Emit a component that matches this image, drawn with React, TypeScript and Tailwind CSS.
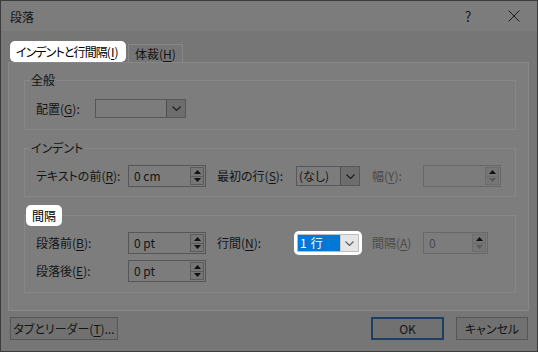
import React from 'react';

const Chevron: React.FC<{ color?: string }> = ({ color = '#1f1f1f' }) => (
    <svg width="9" height="5" viewBox="0 0 9 5" fill="none">
        <polyline points="0.5,0.5 4.5,4.5 8.5,0.5" stroke={color} strokeWidth="1.2" />
    </svg>
);

const Arrow: React.FC<{ up?: boolean; color: string }> = ({ up, color }) => (
    <svg width="7" height="4" viewBox="0 0 7 4">
        {up ? <polygon points="0,4 7,4 3.5,0" fill={color} /> : <polygon points="0,0 7,0 3.5,4" fill={color} />}
    </svg>
);

interface SpinnerProps {
    value?: string;
    width: string;
    disabled?: boolean;
}

const Spinner: React.FC<SpinnerProps> = ({ value = '', width, disabled }) => (
    <div className={`flex h-[22px] ${width} border ${disabled ? 'border-[#686868] text-[#4a4a4a]' : 'border-[#565656] text-[#141414]'} bg-[#7c7c7c]`}>
        <div className="flex-1 whitespace-nowrap pl-[5px] leading-[20px]">{value}</div>
        <div className={`my-[1px] mr-[1px] flex w-[14px] flex-col border ${disabled ? 'border-[#6c6c6c]' : 'border-[#5c5c5c]'} bg-[#767676]`}>
            <div className={`flex flex-1 items-center justify-center border-b ${disabled ? 'border-[#6c6c6c]' : 'border-[#5c5c5c]'}`}>
                <Arrow up color="#111111" />
            </div>
            <div className="flex flex-1 items-center justify-center">
                <Arrow color={disabled ? '#5a5a5a' : '#111111'} />
            </div>
        </div>
    </div>
);

const Combo: React.FC<{ value?: string; width: string; height: string }> = ({ value = '', width, height }) => (
    <div className={`flex ${width} ${height} border border-[#575757] bg-[#7c7c7c]`}>
        <div className="flex-1 whitespace-nowrap pl-[2px] leading-[18px] text-[#141414]">{value}</div>
        <div className="flex w-[19px] items-center justify-center border-l border-[#4e4e4e] bg-[#6d6d6d]">
            <Chevron />
        </div>
    </div>
);

const Label: React.FC<{ width: string; children: React.ReactNode; disabled?: boolean }> = ({ width, children, disabled }) => (
    <div className={`${width} shrink-0 whitespace-nowrap ${disabled ? 'text-[#4a4a4a]' : 'text-[#141414]'}`}>{children}</div>
);

const U: React.FC<{ children: React.ReactNode }> = ({ children }) => <span className="underline underline-offset-2">{children}</span>;

export default function App() {
    return (
        <div className="flex h-[352px] w-[538px] flex-col border border-[#3c3c3c] bg-[#767676] font-['Yu_Gothic_UI','Noto_Sans_CJK_JP','Noto_Sans',sans-serif] text-[12px] leading-[16px] text-[#141414] [font-feature-settings:'palt']">
            {/* Title bar */}
            <div className="flex h-[30px] shrink-0 items-center bg-[#7c7c7c] pl-[9px]">
                <span className="pt-[1px]">段落</span>
                <div className="ml-auto flex h-full">
                    <div className="flex w-[46px] items-center justify-center text-[14px] text-[#1a1a1a]">?</div>
                    <div className="flex w-[46px] items-center justify-center">
                        <svg width="12" height="12" viewBox="0 0 12 12">
                            <path d="M0.5 0.5 L11.5 11.5 M11.5 0.5 L0.5 11.5" stroke="#1a1a1a" strokeWidth="1" />
                        </svg>
                    </div>
                </div>
            </div>

            {/* Tabs */}
            <div className="flex h-[31px] shrink-0 items-end gap-[2px] pl-[9px]">
                <div className="h-[21px] w-[116px] whitespace-nowrap rounded-[5px] bg-white pl-[6px] leading-[21px] text-black">
                    <span className="tracking-[-0.9px]">インデントと行間隔</span>(<U>I</U>)
                </div>
                <div className="h-[18px] w-[55px] whitespace-nowrap border border-b-0 border-[#878787] pl-[6px] leading-[17px]">
                    体裁(<U>H</U>)
                </div>
            </div>

            {/* Panel */}
            <div className="ml-[7px] h-[249px] w-[521px] shrink-0 border border-[#888888] bg-[#7d7d7d] pl-[15px] pt-[9px]">
                <fieldset className="w-[492px] border border-[#878787] px-0 pb-[11px]">
                    <legend className="ml-[5px] px-[1px] leading-[16px]">全般</legend>
                    <div className="flex items-center pl-[11px] pt-[11px]">
                        <Label width="w-[59px]">配置(<U>G</U>):</Label>
                        <Combo width="w-[91px]" height="h-[19px]" />
                    </div>
                </fieldset>

                <fieldset className="mt-[10px] w-[492px] border border-[#878787] px-0 pb-[9px]">
                    <legend className="ml-[5px] px-[1px] leading-[16px]">インデント</legend>
                    <div className="flex items-center pl-[11px] pt-[9px]">
                        <Label width="w-[92px]">テキストの前(<U>R</U>):</Label>
                        <Spinner value="0 cm" width="w-[78px]" />
                        <Label width="ml-[11px] w-[79px]">最初の行(<U>S</U>):</Label>
                        <Combo value="(なし)" width="w-[64px]" height="h-[20px]" />
                        <Label width="ml-[12px] w-[51px]" disabled>幅(<U>Y</U>):</Label>
                        <Spinner width="w-[78px]" disabled />
                    </div>
                </fieldset>

                <fieldset className="mt-[8px] w-[492px] border border-[#878787] px-0 pb-[10px]">
                    <legend className="ml-[1px] h-[21px] rounded-[5px] bg-white px-[6px] leading-[21px] text-black">間隔</legend>
                    <div className="flex flex-col gap-[6px] pl-[11px] pt-[6px]">
                        <div className="flex h-[22px] items-center">
                            <Label width="w-[92px]">段落前(<U>B</U>):</Label>
                            <Spinner value="0 pt" width="w-[78px]" />
                            <Label width="ml-[11px] w-[77px]">行間(<U>N</U>):</Label>
                            <div className="flex h-[24px] w-[68px] rounded-[5px] bg-white p-[3px]">
                                <div className="flex flex-1 border border-[#bdbdbd]">
                                    <div className="flex-1 whitespace-nowrap bg-[#0078d7] pl-[2px] leading-[16px] text-white">
                                        1<span className="ml-[4px]">行</span>
                                    </div>
                                    <div className="flex w-[18px] items-center justify-center border-l border-[#c8c8c8] bg-[#e6e6e6]">
                                        <Chevron color="#606060" />
                                    </div>
                                </div>
                            </div>
                            <Label width="ml-[10px] w-[51px]" disabled>間隔(<U>A</U>)</Label>
                            <Spinner value="0" width="w-[65px]" disabled />
                        </div>
                        <div className="flex h-[22px] items-center">
                            <Label width="w-[92px]">段落後(<U>E</U>):</Label>
                            <Spinner value="0 pt" width="w-[78px]" />
                        </div>
                    </div>
                </fieldset>
            </div>

            {/* Buttons */}
            <div className="mt-[6px] flex px-[9px]">
                <button className="h-[23px] w-[108px] whitespace-nowrap border border-[#575757] bg-[#717171] text-[#141414]">
                    タブとリーダー(<U>T</U>)...
                </button>
                <button className="ml-auto h-[23px] w-[73px] border-2 border-[#1d3f62] bg-[#717171] text-[#141414]">OK</button>
                <button className="ml-[12px] h-[23px] w-[72px] border border-[#575757] bg-[#717171] text-[#141414]">キャンセル</button>
            </div>
        </div>
    );
}
